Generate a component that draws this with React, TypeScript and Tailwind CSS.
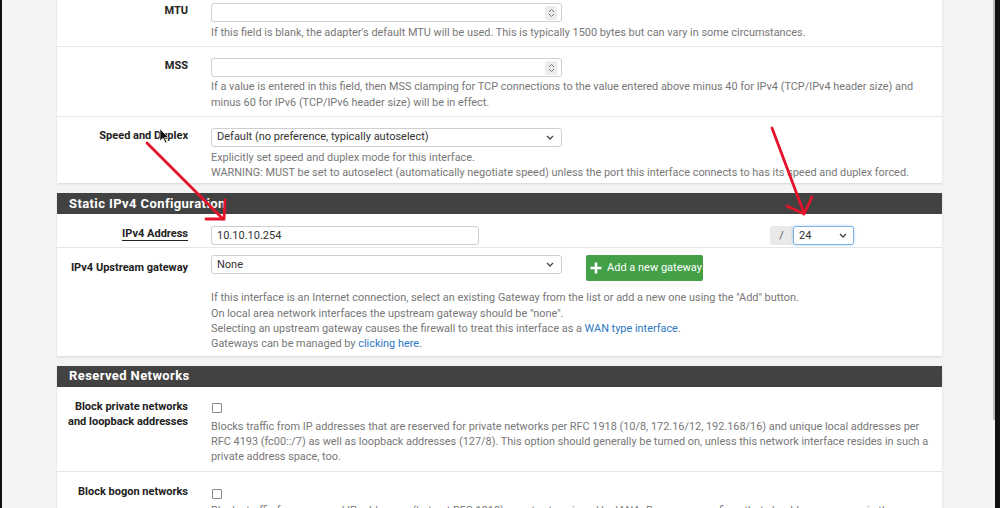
import type { ReactNode } from 'react'

const FONT = "font-['Roboto','Liberation_Sans',sans-serif]"

function Spinner() {
  return (
    <span className="flex h-[14px] w-[12px] flex-col items-center justify-center rounded-[2px] bg-[#ececec]">
      <svg width="7" height="10" viewBox="0 0 7 10" fill="none" stroke="#777" strokeWidth="1">
        <path d="M1 4l2.5-2.5L6 4M1 6l2.5 2.5L6 6" />
      </svg>
    </span>
  )
}

function Chevron() {
  return (
    <svg width="8" height="5" viewBox="0 0 8 5" fill="none" stroke="#444" strokeWidth="1.3">
      <path d="M1 1l3 3 3-3" />
    </svg>
  )
}

function NumberInput() {
  return (
    <div className="flex h-[19px] w-[351px] items-center justify-end rounded-[3px] border border-[#cfcfcf] bg-white pr-[4px]">
      <Spinner />
    </div>
  )
}

function SelectBox({ value, width }: { value: string; width: string }) {
  return (
    <div className={`flex h-[19px] ${width} items-center justify-between rounded-[3px] border border-[#cfcfcf] bg-white pl-[5px] pr-[7px] text-[11px] text-[#333]`}>
      <span>{value}</span>
      <Chevron />
    </div>
  )
}

function Row({ label, children, className = '', underline = false, last = false }: {
  label: ReactNode
  children: ReactNode
  className?: string
  underline?: boolean
  last?: boolean
}) {
  return (
    <div className={`flex ${last ? '' : 'border-b border-[#e6e6e6]'} ${className}`}>
      <div className="w-[131px] shrink-0 text-right text-[11px] font-bold leading-[15px] text-[#222]">
        <span className={underline ? 'border-b border-[#222]' : ''}>{label}</span>
      </div>
      <div className="ml-[23px] flex-1 pr-[12px]">{children}</div>
    </div>
  )
}

function Help({ children }: { children: ReactNode }) {
  return <p className="text-[10.9px] leading-[15.3px] text-[#777]">{children}</p>
}

function SectionHeader({ title }: { title: string }) {
  return (
    <div className="flex h-[21px] items-center bg-[#424242] px-[12px] text-[13px] font-bold tracking-[0.4px] text-white">
      {title}
    </div>
  )
}

function Checkbox() {
  return <span className="block h-[10px] w-[10px] rounded-[1px] border border-[#888] bg-white" />
}

function Annotations() {
  return (
    <svg className="pointer-events-none absolute left-0 top-0" width="1000" height="508" fill="none">
      <g stroke="#e3132b" strokeWidth="2.8" strokeLinecap="round">
        <path d="M147 143L223 219" />
        <path d="M206 219L224 219L225 200" />
        <path d="M772 128L804 213" />
        <path d="M787 206L804 214L812 197" />
      </g>
      <path d="M160 129v12l3-3 2.5 5 1.5-.8-2.5-4.7h4z" fill="#111" stroke="#fff" strokeWidth="0.6" />
    </svg>
  )
}

export default function App() {
  return (
    <div className={`relative flex h-[508px] w-[1000px] overflow-hidden bg-[#f4f4f4] ${FONT}`}>
      <div className="w-[2px] shrink-0 bg-[#111]" />

      <main className="ml-[55px] w-[885px] shrink-0">
        {/* Interface options (scrolled) */}
        <div className="-mt-[9px] bg-white shadow-[0_1px_2px_rgba(0,0,0,0.12)]">
          <Row label="MTU" className="pt-[12px] pb-[6px]">
            <NumberInput />
            <div className="mt-[3px]">
              <Help>If this field is blank, the adapter's default MTU will be used. This is typically 1500 bytes but can vary in some circumstances.</Help>
            </div>
          </Row>
          <Row label="MSS" className="pt-[11px] pb-[6px]">
            <NumberInput />
            <div className="mt-[2px]">
              <Help>
                If a value is entered in this field, then MSS clamping for TCP connections to the value entered above minus 40 for IPv4 (TCP/IPv4 header size) and minus 60 for IPv6 (TCP/IPv6 header size) will be in effect.
              </Help>
            </div>
          </Row>
          <Row label="Speed and Duplex" className="pt-[11px] pb-[3px]" last>
            <SelectBox value="Default (no preference, typically autoselect)" width="w-[351px]" />
            <div className="mt-[3px]">
              <Help>Explicitly set speed and duplex mode for this interface.</Help>
              <Help>WARNING: MUST be set to autoselect (automatically negotiate speed) unless the port this interface connects to has its speed and duplex forced.</Help>
            </div>
          </Row>
        </div>

        {/* Static IPv4 */}
        <div className="mt-[10px] bg-white shadow-[0_1px_2px_rgba(0,0,0,0.12)]">
          <SectionHeader title="Static IPv4 Configuration" />
          <Row label="IPv4 Address" underline className="pt-[12px] pb-[2px]">
            <div className="flex items-center">
              <div className="flex h-[19px] w-[268px] items-center rounded-[3px] border border-[#cfcfcf] bg-white px-[5px] text-[11px] text-[#333]">
                10.10.10.254
              </div>
              <div className="ml-[291px] flex items-center">
                <span className="flex h-[19px] w-[23px] items-center justify-center rounded-l-[3px] bg-[#e9e9e9] text-[11px] text-[#555]">/</span>
                <div className="flex h-[19px] w-[61px] items-center justify-between rounded-[3px] border border-[#7fb3e6] bg-white pl-[5px] pr-[6px] text-[11px] text-[#333] shadow-[0_0_3px_rgba(102,175,233,0.6)]">
                  <span>24</span>
                  <Chevron />
                </div>
              </div>
            </div>
          </Row>
          <Row label={<span className="relative top-[5px]">IPv4 Upstream gateway</span>} className="pt-[7px] pb-[4px]" last>
            <div className="flex items-start">
              <SelectBox value="None" width="w-[351px]" />
              <button className="ml-[24px] flex h-[26px] w-[117px] items-center gap-[5px] rounded-[2px] bg-[#43a047] pl-[4px] text-[11px] text-white">
                <svg width="12" height="12" viewBox="0 0 12 12" stroke="white" strokeWidth="2.6">
                  <path d="M6 0.5v11M0.5 6h11" />
                </svg>
                Add a new gateway
              </button>
            </div>
            <div className="mt-[9px]">
              <Help>If this interface is an Internet connection, select an existing Gateway from the list or add a new one using the "Add" button.</Help>
              <Help>On local area network interfaces the upstream gateway should be "none".</Help>
              <Help>
                Selecting an upstream gateway causes the firewall to treat this interface as a <span className="text-[#2e78c2]">WAN type interface</span>.
              </Help>
              <Help>
                Gateways can be managed by <span className="text-[#2e78c2]">clicking here</span>.
              </Help>
            </div>
          </Row>
        </div>

        {/* Reserved Networks */}
        <div className="mt-[10px] bg-white shadow-[0_1px_2px_rgba(0,0,0,0.12)]">
          <SectionHeader title="Reserved Networks" />
          <Row label={<>Block private networks<br />and loopback addresses</>} className="pt-[12px] pb-[6px]">
            <div className="pl-[1px] pt-[4px]">
              <Checkbox />
            </div>
            <div className="mt-[6px]">
              <Help>
                Blocks traffic from IP addresses that are reserved for private networks per RFC 1918 (10/8, 172.16/12, 192.168/16) and unique local addresses per RFC 4193 (fc00::/7) as well as loopback addresses (127/8). This option should generally be turned on, unless this network interface resides in such a private address space, too.
              </Help>
            </div>
          </Row>
          <Row label="Block bogon networks" className="pt-[12px] pb-[6px]" last>
            <div className="pl-[1px] pt-[5px]">
              <Checkbox />
            </div>
            <div className="mt-[4px]">
              <Help>
                Blocks traffic from reserved IP addresses (but not RFC 1918) or not yet assigned by IANA. Bogons are prefixes that should never appear in the Internet routing table, and so should not appear as the source address in any packets you receive.
              </Help>
            </div>
          </Row>
        </div>
      </main>

      <div className="ml-[51px] flex w-[7px] shrink-0">
        <div className="w-[2px] bg-[#f4f4f4]">
          <div className="h-[420px] w-[2px] bg-[#bdbdbd]" />
        </div>
        <div className="w-[5px] bg-[#111]" />
      </div>

      <Annotations />
    </div>
  )
}
